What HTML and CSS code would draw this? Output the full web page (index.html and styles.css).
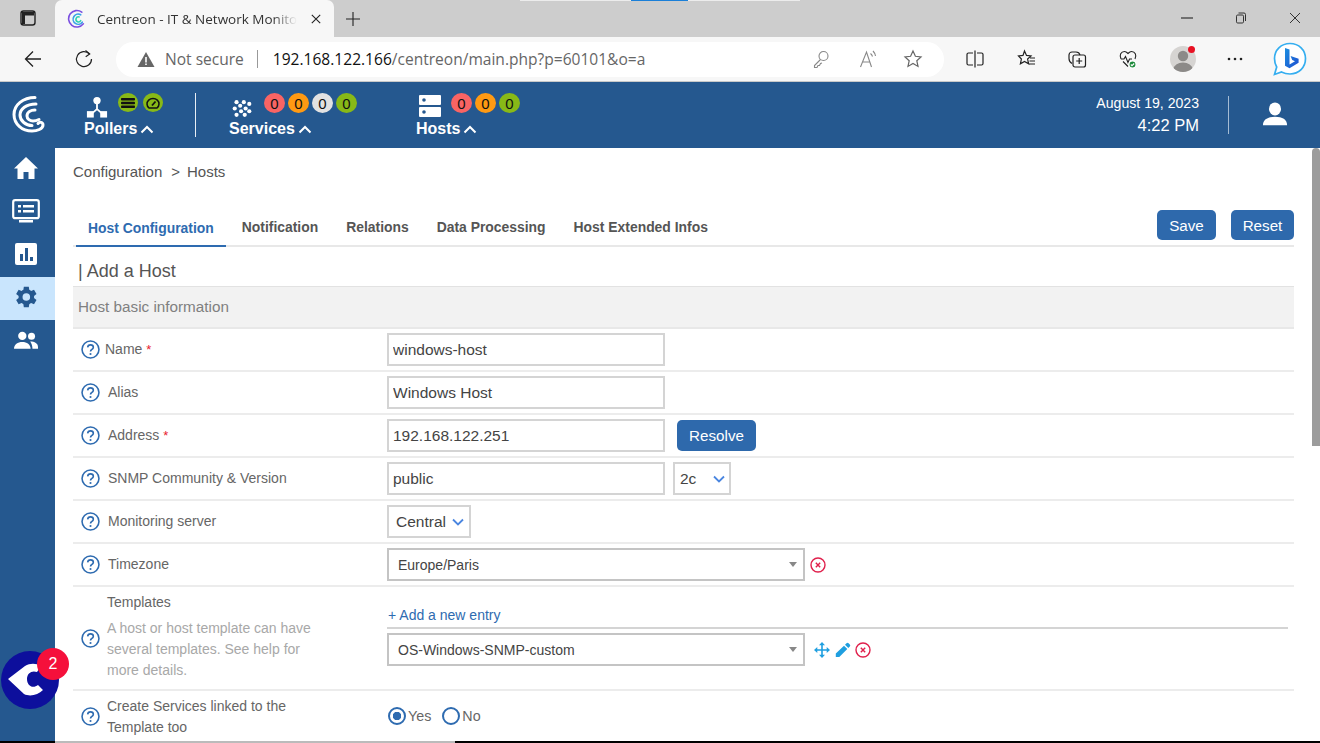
FILE: index.html
```html
<!DOCTYPE html>
<html lang="en">
<head>
<meta charset="utf-8">
<title>Centreon - IT &amp; Network Monitoring</title>
<link rel="stylesheet" href="styles.css">
</head>
<body>
<div class="tabstrip">
  <i class="progress-line"></i>
  <svg class="tabs-ico" width="18" height="18" viewBox="0 0 18 18"><rect x="2" y="2" width="14" height="14" rx="2.5" fill="none" stroke="#222" stroke-width="1.4"/><path d="M3 3h12v3.5H3zM3 6h3v9H3z" fill="#222"/></svg>
  <div class="tab">
    <svg class="tab-logo" width="19" height="19" viewBox="0 0 18 18" fill="none" stroke-width="1.5" stroke-linecap="round"><path d="M14 3A7.800 7.800 0 1 0 15.500 14" stroke="#7b4fe0"/><path d="M13 5.500A4.800 4.800 0 1 0 14.500 12.500" stroke="#3aa0e8"/><path d="M11.500 7.500A2.400 2.400 0 1 0 13 11" stroke="#2ed3b0"/></svg>
    <span class="tab-title">Centreon - IT &amp; Network Monito</span>
    <svg class="tab-x" width="10" height="10" viewBox="0 0 10 10"><path d="M.8.8l8.400 8.400M9.200.8L.8 9.200" stroke="#222" stroke-width="1.100"/></svg>
  </div>
  <svg class="tab-plus" width="16" height="16" viewBox="0 0 16 16"><path d="M8 1v14M1 8h14" stroke="#222" stroke-width="1.100"/></svg>
  <div class="win-btns">
    <svg width="12" height="12" viewBox="0 0 12 12"><path d="M0 6h12" stroke="#333" stroke-width="1.200"/></svg>
    <svg width="12" height="12" viewBox="0 0 12 12" fill="none" stroke="#333" stroke-width="1"><rect x="1.500" y="3" width="7" height="8" rx="1.200"/><path d="M3.500 1h5.500a1.500 1.500 0 0 1 1.500 1.500V9"/></svg>
    <svg width="12" height="12" viewBox="0 0 12 12"><path d="M1 1l10 10M11 1L1 11" stroke="#333" stroke-width="1"/></svg>
  </div>
</div>
<div class="toolbar">
  <svg class="nav-ico" width="20" height="20" viewBox="0 0 20 20" fill="none" stroke="#222" stroke-width="1.300"><path d="M18 10H2.500M10 2.500L2.500 10l7.500 7.500"/></svg>
  <svg class="nav-ico" width="20" height="20" viewBox="0 0 20 20" fill="none" stroke="#222" stroke-width="1.200"><path d="M15.500 5A7.500 7.500 0 1 0 17.500 10"/><path d="M11.500 1.500l4.200 3.500-4 2.800" /></svg>
  <div class="omnibox">
    <svg class="warn" width="18" height="17" viewBox="0 0 18 17"><path d="M9 1L17.500 16H.5z" fill="#666"/><path d="M8.200 6h1.600v5.500H8.200zM8.200 12.500h1.600v1.600H8.200z" fill="#fff"/></svg>
    <span class="not-secure">Not secure</span>
    <span class="sep"></span>
    <span class="url"><b>192.168.122.166</b>/centreon/main.php?p=60101&amp;o=a</span>
    <svg class="omni-ico omni-key" width="20" height="20" viewBox="0 0 20 20" fill="none" stroke="#888" stroke-width="1.100"><circle cx="12.500" cy="7" r="4.500"/><path d="M9.500 10.500L3.500 16.500V18.500H6l1-2h1.500l1-2 1.500-.5"/></svg>
    <svg class="omni-ico" width="20" height="20" viewBox="0 0 20 20" fill="none" stroke="#888" stroke-width="1.100"><path d="M2.500 18L8.500 3l5 15M4.500 13h7.500M12.500 4.500a6 6 0 0 1 2 3M15 2a9 9 0 0 1 2.500 5"/></svg>
    <svg class="omni-ico omni-star" width="20" height="20" viewBox="0 0 20 20" fill="none" stroke="#666" stroke-width="1.200"><path d="M10 2l2.400 5.300 5.600.6-4.200 3.800 1.200 5.700L10 14.500l-5 2.900 1.200-5.700L2 7.900l5.600-.6z"/></svg>
  </div>
  <div class="ext">
    <svg width="20" height="20" viewBox="0 0 20 20" fill="none" stroke="#222" stroke-width="1.200"><path d="M8 4H3.500A1.500 1.500 0 0 0 2 5.500v9A1.500 1.500 0 0 0 3.500 16H8M12 4h4.500A1.500 1.500 0 0 1 18 5.500v9a1.500 1.500 0 0 1-1.500 1.500H12M10 1.500v17"/></svg>
    <svg width="20" height="20" viewBox="0 0 20 20" fill="none" stroke="#222" stroke-width="1.200"><path d="M8.500 2l2 4.400 4.500.5-3.400 3.100 1 4.800-4.100-2.400-4.100 2.400 1-4.800L2.500 6.900 7 6.400zM14 9h5M13.500 12h5.500M13 15h6"/></svg>
    <svg width="20" height="20" viewBox="0 0 20 20" fill="none" stroke="#222" stroke-width="1.200"><rect x="6" y="6" width="12.500" height="12" rx="2"/><path d="M12.200 9v6M9.200 12h6M5 14.500c-2-1-3-2.500-3-5V6a3 3 0 0 1 3-3h4c2 0 3.500 1 4 3"/></svg>
    <svg width="20" height="20" viewBox="0 0 20 20" fill="none" stroke="#222" stroke-width="1.100"><path d="M3 10C1 6 3 2.500 6.500 2.500c1.500 0 2.500 1 3.500 2 1-1 2-2 3.500-2C17 2.500 19 6 17 10M3 10h3l1.500-2.500 2.500 6 1.500-3.500H14M5 12.500l5 5"/><circle cx="14.500" cy="15.500" r="3.500" fill="#1c8a3a" stroke="#fff"/><path d="M12.800 15.500l1.200 1.200 2.200-2.200" stroke="#fff"/></svg>
    <span class="avatar"><svg width="26" height="26" viewBox="0 0 26 26"><clipPath id="av"><circle cx="13" cy="13" r="13"/></clipPath><circle cx="13" cy="13" r="13" fill="#d6d4d2"/><g clip-path="url(#av)" fill="#8c8a88"><circle cx="13" cy="10" r="5.200"/><ellipse cx="13" cy="23" rx="9.500" ry="6.500"/></g></svg><i class="avatar-dot"></i></span>
    <svg class="more" width="20" height="20" viewBox="0 0 20 20" fill="#222"><circle cx="4" cy="10" r="1.300"/><circle cx="10" cy="10" r="1.300"/><circle cx="16" cy="10" r="1.300"/></svg>
    <svg class="bing" width="34" height="34" viewBox="0 0 34 34"><defs><linearGradient id="bg" x1="0" y1="0" x2="1" y2="1"><stop offset="0" stop-color="#1c8fe0"/><stop offset="1" stop-color="#1f4fd0"/></linearGradient></defs><path d="M17 1.500C8 1.500 1.500 8 1.500 16.500c0 3 .8 6 2.200 8.500L1.500 32.500l7-2.500c2.500 1.300 5.400 2 8.500 2C25.800 32 32.500 25.500 32.500 16.500 32.500 8 26 1.500 17 1.500z" fill="#fff" stroke="#35aef0" stroke-width="1.700"/><path d="M12 6l4.500 1.500v15l5.500-3.200-2.800-1.300-1.600-4 8 2.800v3.900l-9.100 5.500L12 23.700z" fill="url(#bg)"/></svg>
  </div>
</div>
<header class="appbar">
  <svg class="brand" width="34" height="38" viewBox="0 0 34 38" fill="none" stroke="#fff" stroke-width="3" stroke-linecap="round"><path d="M23 2.500C11 2.500 2 10 2 19.500 2 29 10 36 20 36c5 0 11-2 11-6 0-3-3.500-3.500-5-1.500"/><path d="M24 9C14 9 8 14 8 20c0 6 6 10.500 12 10.500"/><path d="M23 15c-4 0-8 2-8 6 0 3 3 5 6 5 2 0 4-.5 6-1.500"/></svg>
  <div class="stat stat-pollers">
    <div class="stat-top">
      <svg class="poller-ico" width="22" height="22" viewBox="0 0 24 24" fill="#fff"><circle cx="12" cy="5" r="4"/><path d="M11 8h2v6l6 5-1.300 1.500L12 15.500l-5.700 5L5 19l6-5z"/><rect x="1" y="16.500" width="7.500" height="7"/><rect x="15.500" y="16.500" width="7.500" height="7"/></svg>
      <span class="dot green icon-dot"><svg width="14" height="10" viewBox="0 0 14 10" fill="#111"><rect x="0" y="0" width="14" height="2.600" rx=".8"/><rect x="0" y="3.700" width="14" height="2.600" rx=".8"/><rect x="0" y="7.400" width="14" height="2.600" rx=".8"/></svg></span>
      <span class="dot green icon-dot"><svg width="14" height="12" viewBox="0 0 14 12" fill="none" stroke="#111" stroke-width="1.500"><path d="M3 11A6 5.500 0 1 1 11 11z"/><path d="M6 8.500L9.500 4.500" stroke-width="1.800"/></svg></span>
    </div>
    <div class="stat-label">Pollers<svg class="chev" width="14" height="9" viewBox="0 0 14 9" fill="none" stroke="#fff" stroke-width="2"><path d="M1.500 7.500L7 2l5.500 5.500"/></svg></div>
  </div>
  <span class="bar-sep"></span>
  <div class="stat stat-services">
    <div class="stat-top">
      <svg class="svc-ico" width="20" height="19" viewBox="0 0 22 20" fill="#fff"><circle cx="5" cy="3" r="2.300"/><circle cx="13" cy="3" r="2.300"/><circle cx="19" cy="5" r="2.300"/><circle cx="9" cy="7" r="2.300"/><circle cx="3" cy="10" r="2.300"/><circle cx="15" cy="10" r="2.300"/><circle cx="10" cy="13" r="2.300"/><circle cx="19" cy="13" r="2.300"/><circle cx="5" cy="17" r="2.300"/><circle cx="14" cy="17" r="2.300"/></svg>
      <span class="dots"><span class="dot red">0</span><span class="dot orange">0</span><span class="dot grey">0</span><span class="dot green">0</span></span>
    </div>
    <div class="stat-label">Services<svg class="chev" width="14" height="9" viewBox="0 0 14 9" fill="none" stroke="#fff" stroke-width="2"><path d="M1.500 7.500L7 2l5.500 5.500"/></svg></div>
  </div>
  <div class="stat stat-hosts">
    <div class="stat-top">
      <svg class="host-ico" width="22" height="22" viewBox="0 0 22 22" fill="#fff"><path fill-rule="evenodd" d="M1 0h20a1 1 0 0 1 1 1v8a1 1 0 0 1-1 1H1a1 1 0 0 1-1-1V1a1 1 0 0 1 1-1zm4 3.200a1.800 1.800 0 1 0 0 3.600 1.800 1.800 0 0 0 0-3.600zM1 12h20a1 1 0 0 1 1 1v8a1 1 0 0 1-1 1H1a1 1 0 0 1-1-1v-8a1 1 0 0 1 1-1zm4 3.200a1.800 1.800 0 1 0 0 3.600 1.800 1.800 0 0 0 0-3.600z"/></svg>
      <span class="dots"><span class="dot red">0</span><span class="dot orange">0</span><span class="dot green">0</span></span>
    </div>
    <div class="stat-label">Hosts<svg class="chev" width="14" height="9" viewBox="0 0 14 9" fill="none" stroke="#fff" stroke-width="2"><path d="M1.500 7.500L7 2l5.500 5.500"/></svg></div>
  </div>
  <div class="clock"><span class="date">August 19, 2023</span><span class="time">4:22 PM</span></div>
  <span class="clock-sep"></span>
  <svg class="user" width="26" height="26" viewBox="0 0 28 26" fill="#fff"><ellipse cx="14" cy="7.500" rx="6.500" ry="7"/><path d="M1 25c0-6 5-9 13-9s13 3 13 9z"/></svg>
</header>
<div class="app">
  <nav class="side">
    <a class="side-item"><svg width="26" height="24" viewBox="0 0 26 24" fill="#fff"><path d="M13 1L1 12.500h3.500V23h6v-7h5v7h6V12.500H25z"/></svg></a>
    <a class="side-item"><svg width="28" height="24" viewBox="0 0 28 24"><rect x="1.200" y="1.200" width="25.600" height="18" rx="2" fill="none" stroke="#fff" stroke-width="2.200"/><path d="M6 6h3v2.500H6zM11 6h11v2.500H11zM6 11h3v2.500H6zM11 11h11v2.500H11z" fill="#fff"/><path d="M7 21h14v2.500H7z" fill="#fff"/></svg></a>
    <a class="side-item"><svg width="24" height="24" viewBox="0 0 24 24"><rect x="1" y="1" width="22" height="22" rx="2" fill="#fff"/><path d="M6 12h3v7H6zM11 6h3v13h-3zM16 15h3v4h-3z" fill="#25588f"/></svg></a>
    <a class="side-item side-active"><svg width="26" height="26" viewBox="0 0 24 24" fill="#25588f"><path fill-rule="evenodd" d="M19.400 13a7.500 7.500 0 0 0 0-2l2.300-1.800-2.300-3.900-2.700 1.100a7.500 7.500 0 0 0-1.700-1L14.600 2.500H10l-.4 2.900a7.500 7.500 0 0 0-1.700 1L5.200 5.300 2.900 9.200 5.200 11a7.500 7.500 0 0 0 0 2l-2.300 1.800 2.300 3.900 2.700-1.100a7.500 7.500 0 0 0 1.700 1l.4 2.900h4.600l.4-2.900a7.500 7.500 0 0 0 1.700-1l2.700 1.100 2.300-3.900zM12.300 15.500a3.500 3.500 0 1 1 0-7 3.500 3.500 0 0 1 0 7z"/></svg></a>
    <a class="side-item"><svg width="24" height="19" viewBox="0 0 26 20" fill="#fff"><circle cx="9" cy="5" r="4.500"/><circle cx="19" cy="5.500" r="3.800"/><path d="M0 19c0-5 4-7.500 9-7.500s9 2.500 9 7.500zM17.500 11c5 0 8.500 2 8.500 6v2h-6c0-3-1-6-2.500-8z"/></svg></a>
  </nav>
  <main class="content">
    <div class="crumb">Configuration<span class="crumb-gt">&gt;</span>Hosts</div>
    <div class="tabs-row">
      <a class="t t-active">Host Configuration</a>
      <a class="t">Notification</a>
      <a class="t">Relations</a>
      <a class="t">Data Processing</a>
      <a class="t">Host Extended Infos</a>
      <div class="actions"><button class="btn btn-save">Save</button><button class="btn btn-reset">Reset</button></div>
    </div>
    <h1 class="title">| Add a Host</h1>
    <div class="section">Host basic information</div>

    <div class="row">
      <div class="lab lab-name"><svg class="q"><use href="#help"/></svg><span>Name <em>*</em></span></div>
      <div class="val"><input class="inp" value="windows-host"></div>
    </div>
    <div class="row">
      <div class="lab"><svg class="q"><use href="#help"/></svg><span>Alias</span></div>
      <div class="val"><input class="inp" value="Windows Host"></div>
    </div>
    <div class="row">
      <div class="lab"><svg class="q"><use href="#help"/></svg><span>Address <em>*</em></span></div>
      <div class="val"><input class="inp" value="192.168.122.251"><button class="btn btn-res">Resolve</button></div>
    </div>
    <div class="row">
      <div class="lab"><svg class="q"><use href="#help"/></svg><span>SNMP Community &amp; Version</span></div>
      <div class="val"><input class="inp" value="public"><span class="sel sel-small">2c<svg class="chev2" width="12" height="8" viewBox="0 0 12 8"><path d="M1 1.500l5 5 5-5" fill="none" stroke="#4a86e0" stroke-width="1.800"/></svg></span></div>
    </div>
    <div class="row">
      <div class="lab"><svg class="q"><use href="#help"/></svg><span>Monitoring server</span></div>
      <div class="val"><span class="sel">Central<svg class="chev2" width="12" height="8" viewBox="0 0 12 8"><path d="M1 1.500l5 5 5-5" fill="none" stroke="#4a86e0" stroke-width="1.800"/></svg></span></div>
    </div>
    <div class="row">
      <div class="lab"><svg class="q"><use href="#help"/></svg><span>Timezone</span></div>
      <div class="val"><div class="s2"><span>Europe/Paris</span><i class="s2-caret"></i></div><svg class="x-ico x-zone"><use href="#del"/></svg></div>
    </div>
    <div class="row row-tpl">
      <div class="lab"><svg class="q"><use href="#help"/></svg>
        <div class="lab-txt"><span class="tpl-name">Templates</span><span class="tpl-desc">A host or host template can have several templates. See help for more details.</span></div>
      </div>
      <div class="val-col">
        <a class="add">+ Add a new entry</a>
        <div class="tpl-line">
          <div class="s2"><span>OS-Windows-SNMP-custom</span><i class="s2-caret"></i></div>
          <svg class="mv" width="16" height="16" viewBox="0 0 16 16" fill="#1f9fe0"><path d="M7.200 3h1.600v10H7.200zM3 7.200h10v1.600H3z"/><path d="M8 0l3 3.300H5zM8 16l-3-3.300h6zM0 8l3.300-3v6zM16 8l-3.300 3V5z"/></svg>
          <svg class="pen" width="16" height="16" viewBox="0 0 16 16" fill="#1f9fe0"><path d="M11.500 1.200a1.500 1.500 0 0 1 2.100 0l1.200 1.200a1.500 1.500 0 0 1 0 2.100l-1.500 1.500-3.300-3.300zM9 3.700L12.300 7l-8 8H.8v-3.500z"/></svg>
          <svg class="x-ico"><use href="#del"/></svg>
        </div>
      </div>
    </div>
    <div class="row row-last">
      <div class="lab"><svg class="q"><use href="#help"/></svg><span class="two">Create Services linked to the Template too</span></div>
      <div class="val radios">
        <span class="radio radio-on"></span><span class="r-lab">Yes</span>
        <span class="radio"></span><span class="r-lab">No</span>
      </div>
    </div>
  </main>
  <div class="scroll"><i></i></div>
  <div class="fab"><svg width="36" height="34" viewBox="0 0 36 34" fill="#fff"><path d="M0 16L17 3C22 0 28 0 33 3L29 9C24 7 19 10 19 16 19 23 25 26 30 22L35 27C30 32 22 34 16 31z"/></svg><span class="fab-badge">2</span></div>
</div>
<div class="taskline"></div>
<svg class="defs" width="0" height="0">
  <symbol id="help" viewBox="0 0 18 18"><circle cx="9" cy="9" r="8" fill="none" stroke="#2e6bb0" stroke-width="1.500"/><path d="M6.300 7A2.700 2.700 0 0 1 9 4.600c1.500 0 2.700 1 2.700 2.300 0 1.300-.9 1.800-1.700 2.300-.7.400-1 .9-1 1.600" fill="none" stroke="#2e6bb0" stroke-width="1.500"/><circle cx="9" cy="13.300" r="1" fill="#2e6bb0"/></symbol>
  <symbol id="del" viewBox="0 0 16 16"><circle cx="8" cy="8" r="7" fill="none" stroke="#e0204c" stroke-width="1.400"/><path d="M5.800 5.800l4.400 4.400M10.200 5.800l-4.400 4.400" stroke="#e0204c" stroke-width="1.400"/></symbol>
</svg>
</body>
</html>
```
FILE: styles.css
```css
* { box-sizing: border-box; }
html, body { margin: 0; padding: 0; height: 743px; overflow: hidden; }
body { font-family: "Liberation Sans", Arial, sans-serif; background: #fff; color: #555; font-size: 14px; display: flex; flex-direction: column; }
.defs { position: absolute; }

.tabstrip { height: 37px; background: #cdcdcd; display: flex; align-items: flex-end; flex: none; position: relative; }
.progress-line { position: absolute; left: 520px; top: 0; width: 280px; height: 1px; background: linear-gradient(to right, #ececec 0 111px, #1a7fd8 111px 168px, #ececec 168px); }
.tabs-ico { margin: 0 0 10px 19px; flex: none; }
.tab { width: 279px; height: 37px; margin-left: 18px; background: #f7f7f7; border-radius: 7px 7px 0 0; display: flex; align-items: center; padding: 0 13px 0 12px; flex: none; }
.tab-logo { flex: none; }
.tab-title { font: 13.500px "Open Sans", sans-serif; color: #333; margin-left: 11px; white-space: nowrap; -webkit-mask-image: linear-gradient(to right, #000 88%, transparent); mask-image: linear-gradient(to right, #000 88%, transparent); }
.tab-x { margin-left: auto; flex: none; }
.tab-plus { margin: 0 0 10px 11px; flex: none; }
.win-btns { margin-left: auto; margin-bottom: 13px; display: flex; gap: 42px; padding-right: 19px; }
.win-btns svg { display: block; }

.toolbar { height: 45px; background: #f7f7f7; border-bottom: 1px solid #c9c9c9; display: flex; align-items: center; flex: none; }
.nav-ico { margin-left: 23px; }
.nav-ico + .nav-ico { margin-left: 31px; }
.omnibox { margin-left: 22px; width: 828px; height: 35px; border-radius: 18px; background: #fff; display: flex; align-items: center; padding-left: 21px; font: 15.550px "Open Sans", sans-serif; }
.warn { flex: none; }
.not-secure { margin-left: 10px; color: #666; }
.sep { width: 1px; height: 18px; background: #999; margin: 0 15px 0 13px; }
.url { color: #666; white-space: nowrap; }
.url b { font-weight: 400; color: #111; }
.omni-ico { margin-left: 25px; }
.omni-key { margin-left: auto; margin-right: 2px; }
.omni-star { margin-right: 21px; }
.ext { display: flex; align-items: center; gap: 31px; margin-left: 21px; }
.avatar { position: relative; display: block; height: 26px; width: 26px; margin-left: 1px; }
.avatar svg { display: block; }
.avatar-dot { position: absolute; top: 0; left: 18px; width: 7px; height: 7px; border-radius: 50%; background: #e81123; }
.more { margin-left: -2px; }
.bing { margin-left: -3px; }

.appbar { height: 66px; background: #25588f; flex: none; display: flex; align-items: flex-start; color: #fff; position: relative; }
.brand { margin: 13px 0 0 12px; flex: none; }
.stat { position: relative; }
.stat-top { display: flex; align-items: flex-start; }
.stat-label { font-size: 16px; font-weight: 700; line-height: 18px; display: flex; align-items: center; white-space: nowrap; }
.chev { margin-left: 3px; }
.stat-pollers { margin: 13px 0 0 38px; width: 111px; }
.stat-pollers .stat-top { height: 24px; }
.poller-ico { margin: 1px 10px 0 2px; }
.stat-pollers .stat-label { margin-top: 1px; }
.stat-services { margin: 14px 0 0 33px; width: 187px; }
.stat-services .stat-top { height: 23px; gap: 8px; }
.svc-ico { margin: 3px 0 0 3px; }
.stat-services .stat-label { margin-top: 1px; }
.stat-hosts { margin: 13px 0 0 0; }
.stat-hosts .stat-top { height: 24px; gap: 10px; }
.host-ico { margin-left: 3px; }
.stat-hosts .stat-label { margin-top: 1px; }
.dots { display: flex; gap: 3px; }
.stat-services .dots { margin: -3px 0 0 4px; }
.stat-hosts .dots { margin-top: -2px; }
.dot { width: 21px; height: 20px; border-radius: 50%; font-size: 15px; color: #111; display: flex; align-items: center; justify-content: center; flex: none; }
.dot.icon-dot { width: 20px; height: 19px; margin: -2px 5px 0 0; }
.red { background: #f96464; }
.orange { background: #ff9a13; }
.grey { background: #e2e2e2; }
.green { background: #88b917; }
.bar-sep { width: 1px; height: 44px; background: #e8eef5; margin-top: 11px; flex: none; }
.clock { margin-left: auto; margin-top: 13px; display: flex; flex-direction: column; align-items: flex-end; }
.date { font-size: 14.100px; line-height: 16px; }
.time { font-size: 16.500px; line-height: 20px; margin-top: 4px; }
.clock-sep { width: 1px; height: 38px; background: #a5bcd4; margin: 14px 33px 0 29px; flex: none; }
.user { margin: 19px 32px 0 0; flex: none; }

.app { flex: 1; min-height: 0; display: flex; position: relative; }
.side { width: 55px; background: #25588f; flex: none; display: flex; flex-direction: column; }
.side-item { height: 43px; display: flex; align-items: center; justify-content: center; padding: 0 3px 3px 0; }
.side-active { background: #c9e5fd; }
.content { flex: 1; min-width: 0; padding: 0 18px; overflow: hidden; }
.crumb { height: 48px; padding-top: 15px; font-size: 15px; line-height: 17px; color: #555; }
.crumb-gt { margin: 0 7px 0 9px; }
.tabs-row { height: 51px; display: flex; align-items: flex-end; border-bottom: 2px solid #e8e8e8; padding-left: 3px; position: relative; }
.t { font-size: 13.900px; font-weight: 700; color: #555; height: 37px; padding: 11px 12px 0; margin-right: 4px; line-height: 17px; white-space: nowrap; }
.t-active { color: #2e6bb0; border-bottom: 2px solid #2e6bb0; margin-bottom: -2px; height: 39px; padding-top: 12px; }
.actions { margin-left: auto; display: flex; gap: 15px; align-self: flex-start; margin-top: 14px; }
.btn { background: #2e69ac; border: 0; color: #fff; border-radius: 5px; font: 15.200px "Liberation Sans", sans-serif; height: 30px; padding: 0; }
.btn-save { width: 59px; }
.btn-reset { width: 63px; }
.title { font-size: 18px; font-weight: 400; margin: 0; height: 40px; padding: 14px 0 0 5px; line-height: 21px; color: #555; border-bottom: 1px solid #e2e2e2; }
.section { height: 42px; background: #f2f2f2; border-bottom: 2px solid #e8e8e8; color: #808080; font-size: 15.250px; line-height: 40px; padding-left: 5px; }

.row { display: flex; align-items: center; height: 43px; border-bottom: 2px solid #ececec; }
.lab { width: 314px; flex: none; padding-left: 8px; display: flex; align-items: center; font-size: 14px; color: #666; gap: 8px; }
.lab > span { margin-bottom: 2px; }
.lab-name > span { margin-left: -3px; }
.q { width: 19px; height: 19px; flex: none; }
.lab em { color: #e8202c; font-style: normal; font-size: 13px; }
.val { display: flex; align-items: center; gap: 12px; }
.inp { width: 278px; height: 33px; border: 2px solid #d4d4d4; padding: 0 4px; font: 15.500px "Liberation Sans", sans-serif; color: #444; outline: 0; }
.btn-res { height: 31px; width: 79px; }
.sel { height: 33px; border: 2px solid #d4d4d4; display: flex; align-items: center; padding: 0 5px 0 7px; font-size: 15.500px; color: #444; gap: 6px; }
.sel-small { margin-left: -4px; width: 58px; gap: 0; justify-content: space-between; padding: 0 4px 0 5px; }
.s2 { width: 418px; height: 33px; border: 2px solid #c4c4c4; display: flex; align-items: center; padding-left: 9px; font-size: 14px; color: #444; position: relative; flex: none; }
.s2-caret { position: absolute; right: 6px; top: 12px; border: 4.500px solid transparent; border-top: 5.500px solid #888; border-bottom: 0; }
.x-ico { width: 16px; height: 16px; margin-left: 4px; flex: none; }
.x-zone { margin-left: -7px; }
.row-tpl { height: 104px; align-items: stretch; }
.row-tpl .lab { gap: 7px; }
.lab-txt { display: flex; flex-direction: column; margin-top: 3px; }
.tpl-name { line-height: 20px; margin-bottom: 6px; margin-top: -6px; }
.tpl-desc { color: #a8a8a8; line-height: 21px; width: 208px; }
.val-col { flex: 1; padding: 19px 6px 0 0; }
.add { display: block; color: #2e6bb0; font-size: 14px; line-height: 18px; height: 21px; padding-left: 1px; border-bottom: 2px solid #d4d4d4; box-sizing: content-box; margin-bottom: 4px; }
.tpl-line { display: flex; align-items: center; }
.mv { margin-left: 9px; flex: none; }
.pen { margin-left: 5px; flex: none; }
.row-last { height: 50px; border: 0; }
.row-last .lab { gap: 7px; }
.row-last .lab > span { margin: 2px 0 0 0; }
.two { width: 208px; line-height: 21px; }
.radios { gap: 0; font-size: 14.300px; color: #666; padding-left: 1px; }
.radio { width: 18px; height: 18px; border: 2.500px solid #2e6bb0; border-radius: 50%; flex: none; }
.radio-on { background: radial-gradient(circle, #2e6bb0 0 4px, #fff 4.500px); }
.r-lab { margin: 0 11px 0 2px; }
.scroll { width: 8px; flex: none; background: #fff; }
.scroll i { display: block; height: 298px; background: #9c9c9c; border-radius: 4px 4px 0 0; }
.fab { position: absolute; left: 1px; top: 503px; width: 58px; height: 58px; border-radius: 50%; background: #0d0f9c; display: flex; align-items: center; justify-content: center; padding-right: 8px; }
.fab-badge { position: absolute; left: 36px; top: -3px; width: 32px; height: 32px; border-radius: 50%; background: #f5103b; color: #fff; font-size: 16px; display: flex; align-items: center; justify-content: center; }
.taskline { height: 2px; flex: none; background: linear-gradient(to right, #000 0 55px, #bbb 55px 455px, #000 455px); }
```
